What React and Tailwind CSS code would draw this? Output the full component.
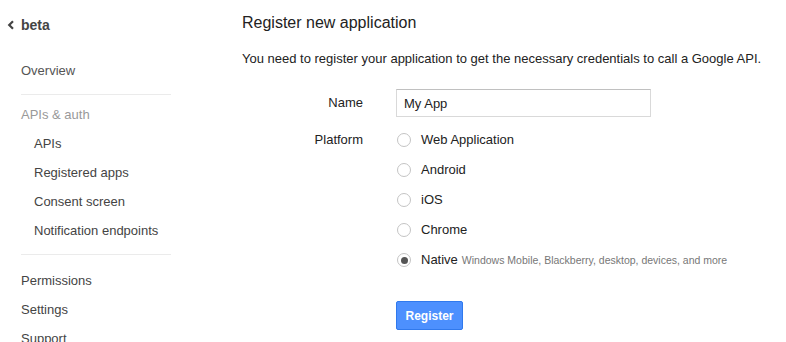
const NAV_TOP = [{ label: 'Overview' }]

const NAV_AUTH = ['APIs', 'Registered apps', 'Consent screen', 'Notification endpoints']

const NAV_BOTTOM = ['Permissions', 'Settings', 'Support']

const PLATFORMS = [
  { label: 'Web Application' },
  { label: 'Android' },
  { label: 'iOS' },
  { label: 'Chrome' },
  { label: 'Native', note: 'Windows Mobile, Blackberry, desktop, devices, and more', checked: true },
]

function Radio({ checked }) {
  return (
    <span className="w-[14px] h-[14px] rounded-full border border-[#c4c4c4] bg-white flex items-center justify-center shrink-0">
      {checked && <span className="w-[7px] h-[7px] rounded-full bg-[#555]" />}
    </span>
  )
}

function Sidebar() {
  return (
    <div className="w-[200px] shrink-0 pl-[21px]">
      <div className="h-[26px] mt-[12px] flex items-center -ml-[14px] gap-[6px]">
        <svg width="8" height="10" viewBox="0 0 8 10" className="text-[#444]">
          <path d="M6 1.2 L2.2 5 L6 8.8" fill="none" stroke="currentColor" strokeWidth="2.2" />
        </svg>
        <span className="text-[14px] font-bold text-[#444]">beta</span>
      </div>
      {NAV_TOP.map(item => (
        <div key={item.label} className="h-[29px] mt-[18px] flex items-center text-[13px] text-[#555]">
          {item.label}
        </div>
      ))}
      <div className="w-[150px] h-px bg-[#ebebeb] mt-[9px]" />
      <div className="h-[29px] mt-[5px] flex items-center text-[13px] text-[#999]">APIs &amp; auth</div>
      {NAV_AUTH.map(label => (
        <div key={label} className="h-[29px] flex items-center pl-[13px] text-[13px] text-[#444]">
          {label}
        </div>
      ))}
      <div className="w-[150px] h-px bg-[#ebebeb] mt-[9px]" />
      <div className="mt-[11px]">
        {NAV_BOTTOM.map(label => (
          <div key={label} className="h-[29px] flex items-center text-[13px] text-[#444]">
            {label}
          </div>
        ))}
      </div>
    </div>
  )
}

export default function App() {
  return (
    <div className="w-[786px] h-[342px] overflow-hidden bg-white flex items-start font-['Liberation_Sans',Arial,sans-serif]">
      <Sidebar />
      <div className="flex flex-col pl-[42px]">
        <h1 className="text-[16px] text-[#222] mt-[13px] h-[20px] leading-[20px]">Register new application</h1>
        <p className="text-[13px] text-[#222] mt-[17px] h-[18px] leading-[18px]">
          You need to register your application to get the necessary credentials to call a Google API.
        </p>

        <div className="flex items-center mt-[21px]">
          <span className="w-[121px] text-right text-[13px] text-[#222]">Name</span>
          <input
            defaultValue="My App"
            className="ml-[33px] w-[255px] h-[28px] border border-[#d9d9d9] border-t-[#c0c0c0] px-[7px] text-[13px] text-[#222] outline-none"
          />
        </div>

        <div className="flex mt-[8px]">
          <span className="w-[121px] text-right text-[13px] text-[#222] h-[30px] leading-[30px]">Platform</span>
          <div className="ml-[34px] flex flex-col">
            {PLATFORMS.map(p => (
              <div key={p.label} className="h-[30px] flex items-center">
                <Radio checked={p.checked} />
                <span className="ml-[10px] text-[13px] text-[#222]">{p.label}</span>
                {p.note && <span className="ml-[4px] text-[10.5px] text-[#777] mt-[2px]">{p.note}</span>}
              </div>
            ))}
          </div>
        </div>

        <div className="mt-[26px] ml-[154px]">
          <button className="w-[67px] h-[29px] rounded-[2px] border border-[#3079ed] bg-[#4d90fe] text-white text-[12px] font-bold">
            Register
          </button>
        </div>
      </div>
    </div>
  )
}
